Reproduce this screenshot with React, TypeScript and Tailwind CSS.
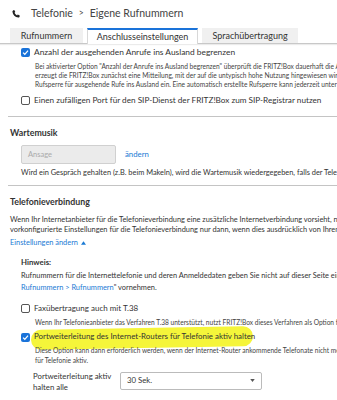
import React from 'react';

function Box({ checked }: { checked?: boolean }) {
  return checked ? (
    <div className="w-[9px] h-[9px] rounded-[2px] bg-[#1a73d9] flex items-center justify-center shrink-0">
      <svg width="7" height="7" viewBox="0 0 10 10">
        <path d="M1.5 5.2 L4 7.6 L8.6 2.2" fill="none" stroke="#fff" strokeWidth="1.8" />
      </svg>
    </div>
  ) : (
    <div className="w-[9px] h-[9px] rounded-[2px] border border-[#555] bg-white shrink-0" />
  );
}

export default function App() {
  return (
    <div className="w-[337px] h-[400px] overflow-hidden bg-white text-[#333] whitespace-nowrap" style={{ fontFamily: 'Lato, "Noto Sans", sans-serif' }}>
      {/* Breadcrumb */}
      <div className="h-[27px] flex items-center pl-[11px] text-[10.5px] text-[#444]">
        <svg width="10" height="10" viewBox="0 0 24 24" className="mr-[10px]">
          <path d="M6.6 2.5c.6-.3 1.2-.1 1.5.4l2 3.4c.3.5.2 1.2-.3 1.6L8.3 9c1.3 2.8 3.5 5 6.3 6.3l1.1-1.5c.4-.5 1.1-.6 1.6-.3l3.4 2c.5.3.7.9.4 1.5l-1.3 2.6c-.4.8-1.3 1.2-2.2 1C9.5 19.4 4.6 14.5 3.4 6.4c-.1-.9.3-1.8 1.1-2.2z" fill="#222" />
        </svg>
        <span>Telefonie</span>
        <span className="mx-[6px] text-[8.5px]">&gt;</span>
        <span>Eigene Rufnummern</span>
      </div>

      {/* Tabs */}
      <div className="flex pl-[10px] gap-[4px] border-b border-[#c8c8c8] shadow-[0_1px_1px_rgba(0,0,0,0.08)] h-[17px] items-end text-[9px]">
        <div className="w-[73px] h-[15px] bg-[#f0f0f0] flex items-center justify-center">Rufnummern</div>
        <div className="w-[111px] h-[16px] bg-white border-t-2 border-[#1a73d9] border-x border-x-[#d8d8d8] flex items-center justify-center -mb-px">Anschlusseinstellungen</div>
        <div className="w-[96px] h-[15px] bg-[#f0f0f0] flex items-center justify-center">Sprachübertragung</div>
      </div>

      {/* Ausland */}
      <div className="pl-[21px] mt-[4px]">
        <div className="flex items-center gap-[4px] h-[9px] text-[8.4px]">
          <Box checked />
          <span>Anzahl der ausgehenden Anrufe ins Ausland begrenzen</span>
        </div>
        <div className="pl-[14px] mt-[5px] text-[6.6px] leading-[9px] text-[#444]">
          <div>Bei aktivierter Option "Anzahl der Anrufe ins Ausland begrenzen" überprüft die FRITZ!Box dauerhaft die Anzahl</div>
          <div>erzeugt die FRITZ!Box zunächst eine Mitteilung, mit der auf die untypisch hohe Nutzung hingewiesen wird</div>
          <div>Rufsperre für ausgehende Rufe ins Ausland ein. Eine automatisch erstellte Rufsperre kann jederzeit unter</div>
        </div>
        <div className="flex items-center gap-[4px] h-[9px] mt-[7px] text-[8.2px]">
          <Box />
          <span>Einen zufälligen Port für den SIP-Dienst der FRITZ!Box zum SIP-Registrar nutzen</span>
        </div>
      </div>

      <div className="ml-[8px] mt-[11px] border-t border-[#c4c4c4]" />

      {/* Wartemusik */}
      <div className="pl-[10px] mt-[11px] text-[8.8px] font-bold leading-[10px] text-[#333]">Wartemusik</div>
      <div className="pl-[21px] mt-[7px] flex items-center">
        <div className="w-[95px] h-[19px] bg-[#ebebeb] border border-[#d0d0d0] rounded-[2px] flex items-center pl-[6px] text-[7.5px] text-[#aaa]">Ansage</div>
        <span className="ml-[9px] text-[7.8px] text-[#1a7ad4]">ändern</span>
      </div>
      <div className="pl-[21px] mt-[4px] text-[7.4px] leading-[10px]">Wird ein Gespräch gehalten (z.B. beim Makeln), wird die Wartemusik wiedergegeben, falls der Telefonanbieter</div>

      <div className="ml-[8px] mt-[7px] border-t border-[#c4c4c4]" />

      {/* Telefonieverbindung */}
      <div className="pl-[10px] mt-[11px] text-[8.8px] font-bold leading-[10px]">Telefonieverbindung</div>
      <div className="pl-[10px] mt-[8px] text-[7.4px] leading-[9.5px]">
        <div>Wenn Ihr Internetanbieter für die Telefonieverbindung eine zusätzliche Internetverbindung vorsieht, nutzt</div>
        <div>vorkonfigurierte Einstellungen für die Telefonieverbindung nur dann, wenn dies ausdrücklich von Ihrem</div>
        <div className="mt-[4px] text-[#1a7ad4] flex items-center gap-[3px]">
          Einstellungen ändern
          <svg width="5" height="4" viewBox="0 0 6 4"><path d="M0 4 L3 0 L6 4z" fill="#1a7ad4" /></svg>
        </div>
      </div>

      <div className="pl-[21px] mt-[9px]">
        <div className="text-[7.8px] font-bold leading-[10px]">Hinweis:</div>
        <div className="mt-[3px] text-[7.4px] leading-[12px]">
          <div>Rufnummern für die Internettelefonie und deren Anmeldedaten geben Sie nicht auf dieser Seite ein</div>
          <div><span className="text-[#1a7ad4]">Rufnummern &gt; Rufnummern</span>" vornehmen.</div>
        </div>

        <div className="flex items-center gap-[4px] h-[9px] mt-[10px] text-[8px]">
          <Box />
          <span>Faxübertragung auch mit T.38</span>
        </div>
        <div className="pl-[14px] mt-[5px] text-[6.6px] leading-[9px] text-[#444]">Wenn Ihr Telefonieanbieter das Verfahren T.38 unterstützt, nutzt FRITZ!Box dieses Verfahren als Option für</div>

        <div className="relative flex items-center gap-[4px] h-[9px] mt-[6px] text-[7.9px]">
          <div className="absolute left-[10px] top-[-5px] w-[222px] h-[20px] bg-[#f5f53a] rounded-[10px] -rotate-1" />
          <div className="relative"><Box checked /></div>
          <span className="relative">Portweiterleitung des Internet-Routers für Telefonie aktiv halten</span>
        </div>
        <div className="relative pl-[14px] mt-[3px] text-[6.6px] leading-[10px] text-[#444]">
          <div>Diese Option kann dann erforderlich werden, wenn der Internet-Router ankommende Telefonate nicht mehr</div>
          <div>für Telefonie aktiv.</div>
        </div>

        <div className="flex items-start pl-[12px] mt-[7px]">
          <div className="w-[87px] text-[7.8px] leading-[11px] mt-[-1px]">
            <div>Portweiterleitung aktiv</div>
            <div>halten alle</div>
          </div>
          <div className="w-[142px] h-[18px] border border-[#bbb] rounded-[2px] flex items-center justify-between px-[6px] text-[7.8px]">
            <span>30 Sek.</span>
            <svg width="5" height="3" viewBox="0 0 6 4"><path d="M0 0 L3 4 L6 0z" fill="#555" /></svg>
          </div>
        </div>
      </div>
    </div>
  );
}
